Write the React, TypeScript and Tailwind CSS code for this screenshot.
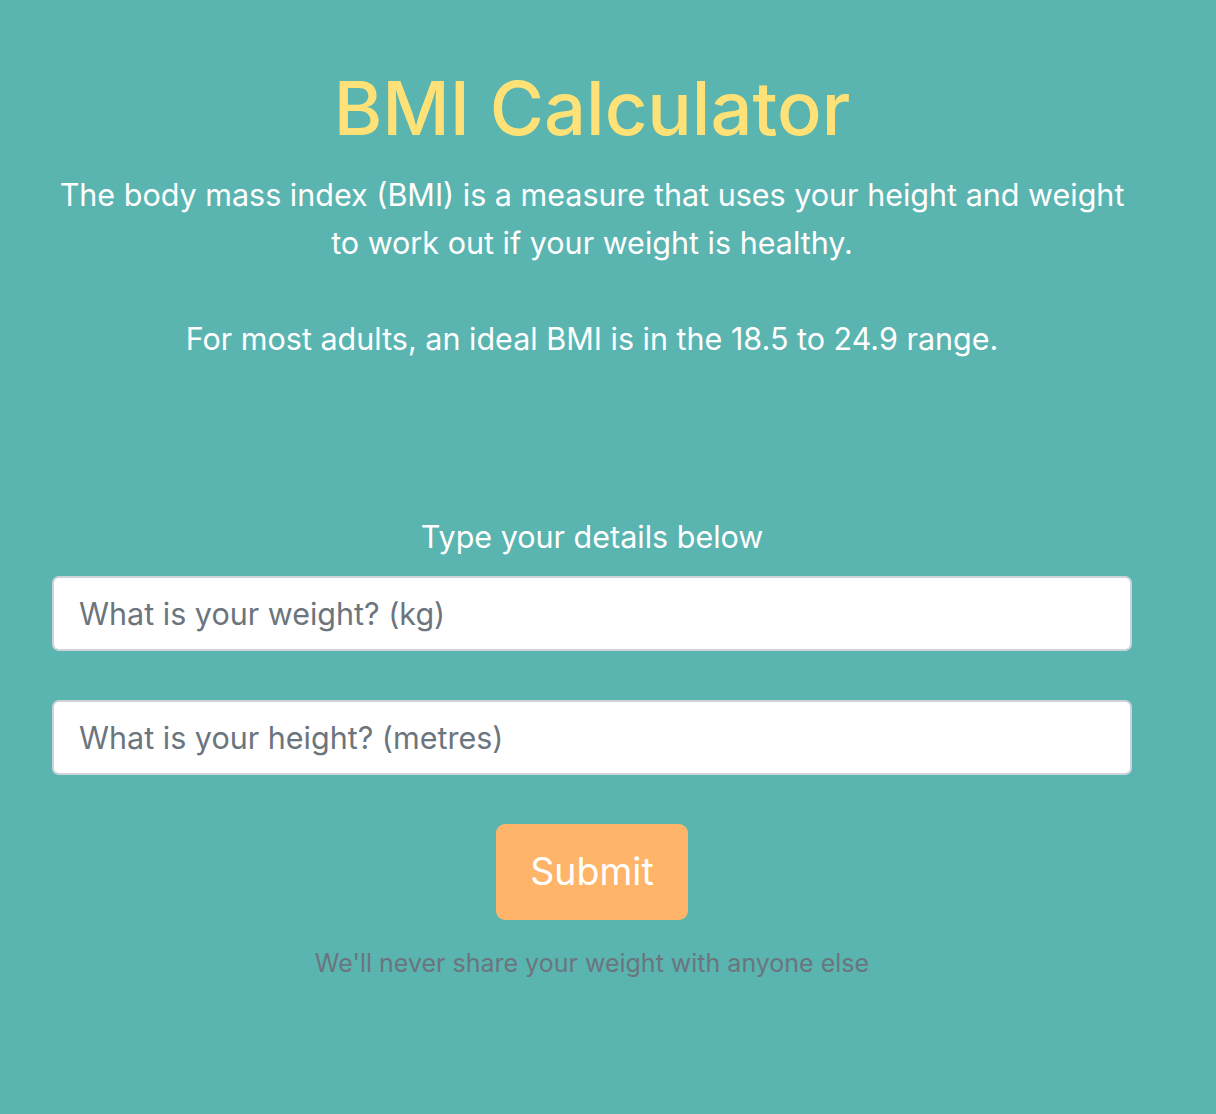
export default function App() {
  return (
    <div
      className="min-h-[1114px] w-full bg-[#5ab4b0] text-white"
      style={{ fontFamily: 'Inter, "Noto Sans", sans-serif' }}
    >
      <div className="ml-[52px] w-[1080px] pt-[60px] text-center">
        <h1 className="text-[74px] leading-[96px] font-medium text-[#ffe277]">
          BMI Calculator
        </h1>
        <p className="mt-[15px] text-[30.5px] leading-[48px]">
          The body mass index (BMI) is a measure that uses your height and weight
          <br />
          to work out if your weight is healthy.
          <br />
          <br />
          For most adults, an ideal BMI is in the 18.5 to 24.9 range.
        </p>

        <form className="mt-[150px]" onSubmit={(e) => e.preventDefault()}>
          <p className="text-[30.5px] leading-[48px]">Type your details below</p>
          <input
            type="text"
            placeholder="What is your weight? (kg)"
            className="mt-[15px] block h-[75px] w-full rounded-[7px] border-2 border-[#ced4da] bg-white px-[25px] text-[30.5px] text-[#495057] placeholder:text-[#6c757d] outline-none"
          />
          <input
            type="text"
            placeholder="What is your height? (metres)"
            className="mt-[49px] block h-[75px] w-full rounded-[7px] border-2 border-[#ced4da] bg-white px-[25px] text-[30.5px] text-[#495057] placeholder:text-[#6c757d] outline-none"
          />
          <button
            type="submit"
            className="mt-[49px] h-[96px] w-[192px] rounded-[9px] bg-[#ffb569] text-[37.5px] text-white"
          >
            Submit
          </button>
          <p className="mt-[29px] text-[25px] leading-[28px] text-[#6c757d]">
            We'll never share your weight with anyone else
          </p>
        </form>
      </div>
    </div>
  );
}
